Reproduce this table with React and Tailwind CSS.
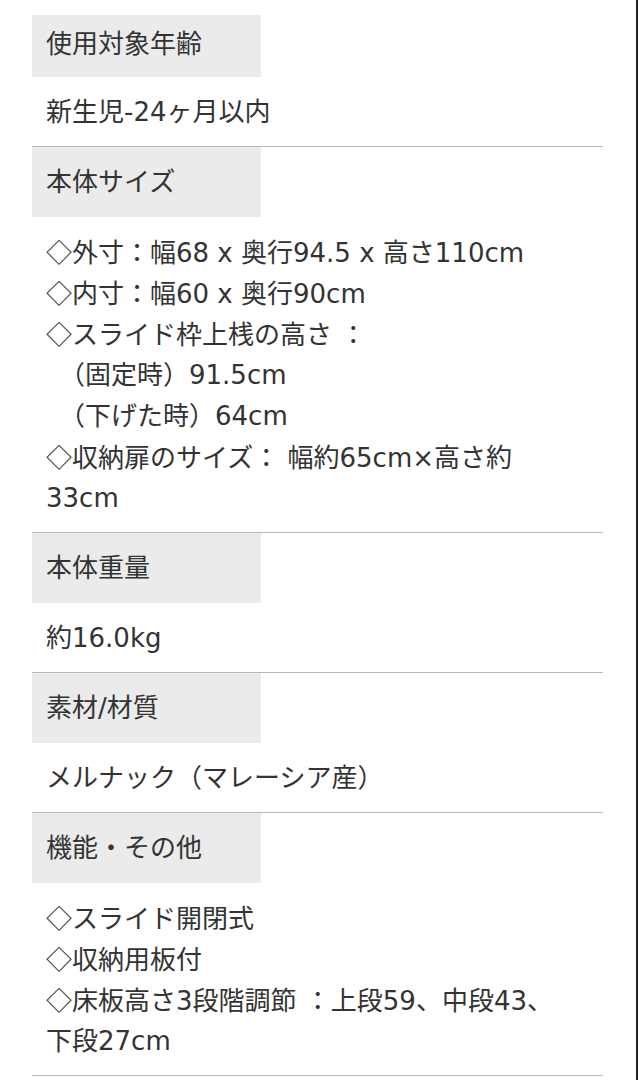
import React from 'react';

// 商品スペック表
const specs = [
  { label: '使用対象年齢', lines: ['新生児-24ヶ月以内'] },
  {
    label: '本体サイズ',
    lines: [
      '◇外寸：幅68 x 奥行94.5 x 高さ110cm',
      '◇内寸：幅60 x 奥行90cm',
      '◇スライド枠上桟の高さ ：',
      '　（固定時）91.5cm',
      '　（下げた時）64cm',
      '◇収納扉のサイズ： 幅約65cm×高さ約',
      '33cm',
    ],
  },
  { label: '本体重量', lines: ['約16.0kg'] },
  { label: '素材/材質', lines: ['メルナック（マレーシア産）'] },
  {
    label: '機能・その他',
    lines: [
      '◇スライド開閉式',
      '◇収納用板付',
      '◇床板高さ3段階調節 ：上段59、中段43、',
      '下段27cm',
    ],
  },
];

// ◇ は全角幅で表示
function Line({ text }) {
  const diamond = text.startsWith('◇');
  return (
    <div className="h-[41px] flex items-center whitespace-pre">
      <span className="leading-none">
        {diamond && <span className="font-['Noto_Sans_CJK_JP']">◇</span>}
        {diamond ? text.slice(1) : text}
      </span>
    </div>
  );
}

export default function App() {
  return (
    <div
      className="min-h-screen bg-white border-r-2 border-[#222] pt-[15px] pl-[32px] pr-[33px] text-[26px] text-[#333]"
      style={{ fontFamily: '"DejaVu Sans", "Noto Sans CJK JP", sans-serif' }}
    >
      {specs.map((s, i) => (
        <div key={s.label} className="border-b border-[#b8b8b8]">
          {/* 見出し */}
          <div
            className={
              i === 0
                ? 'w-[229px] h-[62px] bg-[#ebebeb] pl-[14px] pb-[5px] flex items-center whitespace-nowrap'
                : 'w-[229px] h-[70px] bg-[#ebebeb] pl-[14px] flex items-center whitespace-nowrap'
            }
          >
            <span className="leading-none">{s.label}</span>
          </div>
          {/* 内容 */}
          <div className="pl-[14px] pt-[14px] pb-[14px]">
            {s.lines.map((l, j) => (
              <Line key={j} text={l} />
            ))}
          </div>
        </div>
      ))}
    </div>
  );
}
